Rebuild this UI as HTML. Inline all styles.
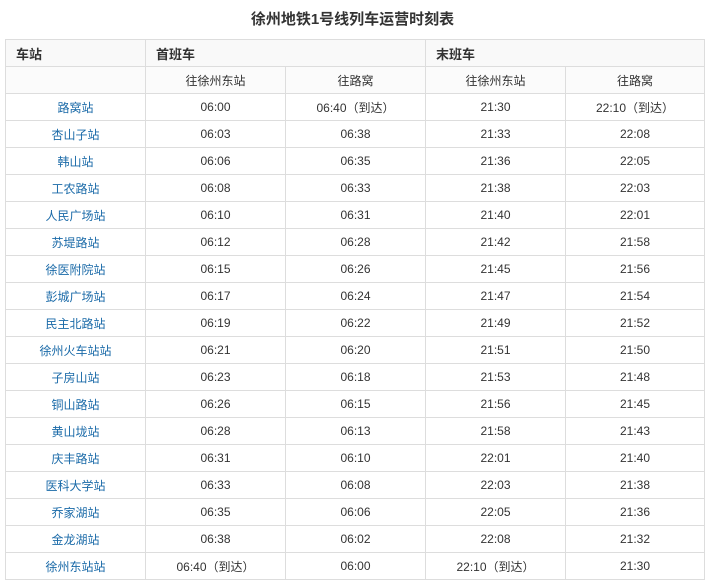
<!DOCTYPE html>
<html><head><meta charset="utf-8"><style>
body{margin:0;background:#fff;font-family:"Liberation Sans","Noto Sans CJK SC",sans-serif;font-size:12px;color:#333;}
h1{margin:0;height:39px;line-height:39px;text-align:center;font-size:15px;font-weight:bold;color:#333;}
table{position:absolute;left:5px;top:39px;width:699px;border-collapse:collapse;table-layout:fixed;}
td,th{border:1px solid #ddd;height:26px;padding:0;text-align:center;}
th{text-align:left;padding-left:10px;background:#f9f9f9;font-size:13px;}
tr.s td{background:#fbfbfb;}
td.st{color:#1a6aa8;}
</style></head><body>
<h1>徐州地铁1号线列车运营时刻表</h1>
<table>
<colgroup><col style="width:140px"><col style="width:140px"><col style="width:140px"><col style="width:140px"><col style="width:139px"></colgroup>
<tr><th>车站</th><th colspan="2">首班车</th><th colspan="2">末班车</th></tr>
<tr class="s"><td></td><td>往徐州东站</td><td>往路窝</td><td>往徐州东站</td><td>往路窝</td></tr>
<tr><td class="st">路窝站</td><td>06:00</td><td>06:40（到达）</td><td>21:30</td><td>22:10（到达）</td></tr>
<tr><td class="st">杏山子站</td><td>06:03</td><td>06:38</td><td>21:33</td><td>22:08</td></tr>
<tr><td class="st">韩山站</td><td>06:06</td><td>06:35</td><td>21:36</td><td>22:05</td></tr>
<tr><td class="st">工农路站</td><td>06:08</td><td>06:33</td><td>21:38</td><td>22:03</td></tr>
<tr><td class="st">人民广场站</td><td>06:10</td><td>06:31</td><td>21:40</td><td>22:01</td></tr>
<tr><td class="st">苏堤路站</td><td>06:12</td><td>06:28</td><td>21:42</td><td>21:58</td></tr>
<tr><td class="st">徐医附院站</td><td>06:15</td><td>06:26</td><td>21:45</td><td>21:56</td></tr>
<tr><td class="st">彭城广场站</td><td>06:17</td><td>06:24</td><td>21:47</td><td>21:54</td></tr>
<tr><td class="st">民主北路站</td><td>06:19</td><td>06:22</td><td>21:49</td><td>21:52</td></tr>
<tr><td class="st">徐州火车站站</td><td>06:21</td><td>06:20</td><td>21:51</td><td>21:50</td></tr>
<tr><td class="st">子房山站</td><td>06:23</td><td>06:18</td><td>21:53</td><td>21:48</td></tr>
<tr><td class="st">铜山路站</td><td>06:26</td><td>06:15</td><td>21:56</td><td>21:45</td></tr>
<tr><td class="st">黄山垅站</td><td>06:28</td><td>06:13</td><td>21:58</td><td>21:43</td></tr>
<tr><td class="st">庆丰路站</td><td>06:31</td><td>06:10</td><td>22:01</td><td>21:40</td></tr>
<tr><td class="st">医科大学站</td><td>06:33</td><td>06:08</td><td>22:03</td><td>21:38</td></tr>
<tr><td class="st">乔家湖站</td><td>06:35</td><td>06:06</td><td>22:05</td><td>21:36</td></tr>
<tr><td class="st">金龙湖站</td><td>06:38</td><td>06:02</td><td>22:08</td><td>21:32</td></tr>
<tr><td class="st">徐州东站站</td><td>06:40（到达）</td><td>06:00</td><td>22:10（到达）</td><td>21:30</td></tr>
</table>
</body></html>
